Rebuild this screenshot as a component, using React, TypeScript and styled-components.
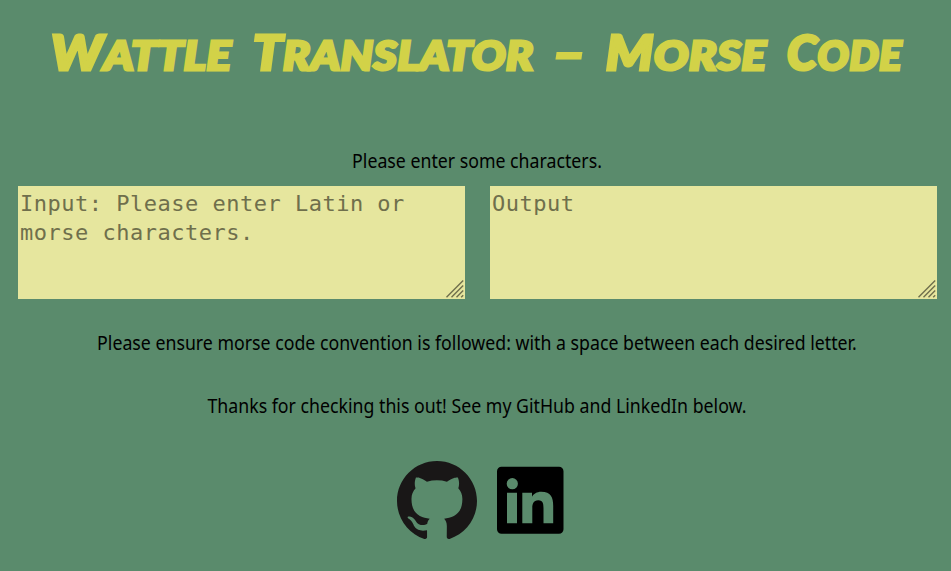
import React from "react";
import styled, { createGlobalStyle } from "styled-components";

const GlobalStyle = createGlobalStyle`
  * { box-sizing: border-box; }
  body {
    margin: 0;
    background: #5a8b6c;
    color: #000;
    font-family: "Noto Sans", sans-serif;
    font-size: 19px;
    overflow: hidden;
  }
`;

const Page = styled.main`
  display: flex;
  flex-direction: column;
  height: 571px;
`;

const Title = styled.h1`
  display: flex;
  margin: 0;
  height: 149px;
  padding: 22px 0 0 51px;
  color: #d2d248;
  font-family: "Permanent Marker", Lato, sans-serif;
  font-size: 40px;
  font-weight: 900;
  font-style: italic;
  line-height: 60px;
  text-transform: uppercase;
  white-space: nowrap;
`;

const Word = styled.span<{ $width: number; $stretch: number }>`
  display: block;
  flex: none;
  width: ${(p) => p.$width}px;
  transform: scaleX(${(p) => p.$stretch});
  transform-origin: left;
  letter-spacing: 0.6px;
  -webkit-text-stroke: 3px #d2d248;

  &::first-letter {
    font-size: 47px;
  }
`;

const Line = styled.p<{ $gap: number }>`
  margin: 0 0 ${(p) => p.$gap}px 3px;
  line-height: 25px;
  text-align: center;
  white-space: nowrap;
  transform: scaleX(0.933);
`;

const Fields = styled.div`
  display: grid;
  grid-template-columns: 447px 447px;
  gap: 25px;
  padding-left: 18px;
  margin-bottom: 32px;
`;

const Field = styled.div`
  position: relative;
  height: 113px;
`;

const Area = styled.textarea`
  display: block;
  width: 100%;
  height: 100%;
  padding: 3px 2px 2px;
  border: 0;
  outline: 0;
  resize: none;
  overflow: hidden;
  background: #e6e69e;
  font-family: Consolas, "DejaVu Sans Mono", monospace;
  font-size: 22px;
  letter-spacing: 0.5px;
  line-height: 29px;

  &::placeholder {
    color: #6f6f4c;
    opacity: 1;
  }
`;

const Grip = styled.svg`
  position: absolute;
  right: 1px;
  bottom: 1px;
  pointer-events: none;
`;

const Links = styled.nav`
  display: flex;
  align-items: center;
  gap: 20px;
  padding-left: 397px;
`;

const IconLink = styled.a<{ $color: string }>`
  display: flex;
  color: ${(p) => p.$color};
`;

const words = [
  { text: "Wattle", width: 202, stretch: 1.137 },
  { text: "Translator", width: 299, stretch: 1.115 },
  { text: "–", width: 54, stretch: 1.25 },
  { text: "Morse", width: 181, stretch: 1.135 },
  { text: "Code", width: 120, stretch: 1.03 },
];

function TextField({ placeholder }: { placeholder: string }) {
  return (
    <Field>
      <Area placeholder={placeholder} />
      <Grip width="18" height="18" viewBox="0 0 18 18" fill="none" stroke="#6f6f4c" strokeWidth="1.4">
        <path d="M0.5 17.2 17.2 0.5M5.5 17.2 17.2 5.5M10.5 17.2 17.2 10.5M15.2 17.2 17.2 15.2" />
      </Grip>
    </Field>
  );
}

export default function App() {
  return (
    <>
      <GlobalStyle />
      <Page>
        <Title>
          {words.map((w) => (
            <Word key={w.text} $width={w.width} $stretch={w.stretch}>
              {w.text}
            </Word>
          ))}
        </Title>
        <Line $gap={12}>Please enter some characters.</Line>
        <Fields>
          <TextField placeholder="Input: Please enter Latin or morse characters." />
          <TextField placeholder="Output" />
        </Fields>
        <Line $gap={38}>
          Please ensure morse code convention is followed: with a space between each desired letter.
        </Line>
        <Line $gap={41}>Thanks for checking this out! See my GitHub and LinkedIn below.</Line>
        <Links>
          <IconLink $color="#191717" aria-label="GitHub">
            <svg width="80" height="80" viewBox="0 0 24 24" fill="currentColor">
              <path d="M12 .297c-6.63 0-12 5.373-12 12 0 5.303 3.438 9.8 8.205 11.385.6.113.82-.258.82-.577 0-.285-.01-1.04-.015-2.04-3.338.724-4.042-1.61-4.042-1.61C4.422 18.07 3.633 17.7 3.633 17.7c-1.087-.744.084-.729.084-.729 1.205.084 1.838 1.236 1.838 1.236 1.07 1.835 2.809 1.305 3.495.998.108-.776.417-1.305.76-1.605-2.665-.3-5.466-1.332-5.466-5.93 0-1.31.465-2.38 1.235-3.22-.135-.303-.54-1.523.105-3.176 0 0 1.005-.322 3.3 1.23.96-.267 1.98-.399 3-.405 1.02.006 2.04.138 3 .405 2.28-1.552 3.285-1.23 3.285-1.23.645 1.653.24 2.873.12 3.176.765.84 1.23 1.91 1.23 3.22 0 4.61-2.805 5.625-5.475 5.92.42.36.81 1.096.81 2.22 0 1.606-.015 2.896-.015 3.286 0 .315.21.69.825.57C20.565 22.092 24 17.592 24 12.297c0-6.627-5.373-12-12-12" />
            </svg>
          </IconLink>
          <IconLink $color="#000" aria-label="LinkedIn">
            <svg width="67" height="70" viewBox="0 -1.4 67 70" fill="currentColor" fillRule="evenodd">
              <path d="M4.5 .4H62a4.5 4.5 0 0 1 4.5 4.5V62.8a4.5 4.5 0 0 1-4.5 4.5H4.5A4.5 4.5 0 0 1 0 62.8V4.9A4.5 4.5 0 0 1 4.5 .4ZM15.3 11.7a5.6 5.6 0 1 0 0 11.2a5.6 5.6 0 1 0 0-11.2ZM10 26.3H20V56.8H10ZM25.3 26.3H35V30.4C36.5 27.6 39.8 25.4 44.2 25.4C54 25.4 56.2 31.3 56.2 39.6V56.8H46.5V41.8C46.5 38 46.3 33.8 41.3 33.8C36.2 33.8 35.3 37.8 35.3 41.6V56.8H25.3Z" />
            </svg>
          </IconLink>
        </Links>
      </Page>
    </>
  );
}
